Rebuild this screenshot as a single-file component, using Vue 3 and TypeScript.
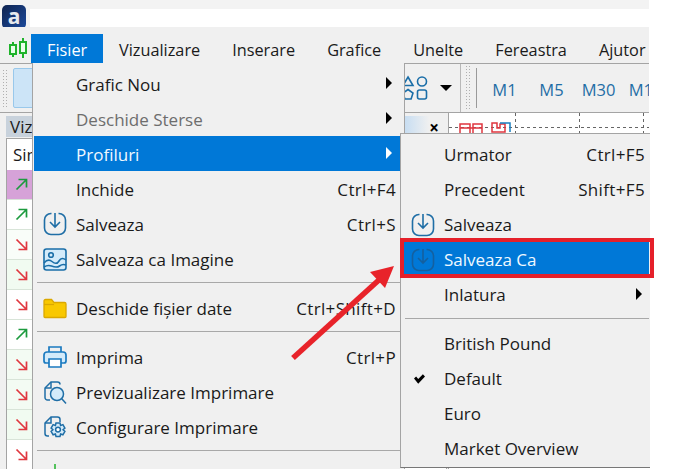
<script setup lang="ts">
interface Row {
  label?: string
  shortcut?: string
  icon?: string
  disabled?: boolean
  active?: boolean
  arrow?: boolean
  check?: boolean
  sep?: boolean
}
const topMenu = ['Fisier', 'Vizualizare', 'Inserare', 'Grafice', 'Unelte', 'Fereastra', 'Ajutor']
const periods = ['M1', 'M5', 'M30', 'M15']
const quotes = [
  { up: true, bg: '#d6a2d8' },
  { up: true, bg: '#ffffff' },
  { up: false, bg: '#f9fdf9' },
  { up: false, bg: '#f1fbf1' },
  { up: false, bg: '#ffffff' },
  { up: true, bg: '#ffffff' },
  { up: false, bg: '#f3fbf3' },
  { up: false, bg: '#f3fbf3' },
  { up: false, bg: '#f1fbf1' },
  { up: false, bg: '#ffffff' }
]
const menus: { cls: string; rows: Row[] }[] = [
  {
    cls: 'file',
    rows: [
      { label: 'Grafic Nou', arrow: true },
      { label: 'Deschide Sterse', arrow: true, disabled: true },
      { label: 'Profiluri', arrow: true, active: true },
      { label: 'Inchide', shortcut: 'Ctrl+F4' },
      { label: 'Salveaza', shortcut: 'Ctrl+S', icon: 'save' },
      { label: 'Salveaza ca Imagine', icon: 'image' },
      { sep: true },
      { label: 'Deschide fișier date', shortcut: 'Ctrl+Shift+D', icon: 'folder' },
      { sep: true },
      { label: 'Imprima', shortcut: 'Ctrl+P', icon: 'print' },
      { label: 'Previzualizare Imprimare', icon: 'preview' },
      { label: 'Configurare Imprimare', icon: 'setup' },
      { sep: true },
      { icon: 'tick' }
    ]
  },
  {
    cls: 'profiles',
    rows: [
      { label: 'Urmator', shortcut: 'Ctrl+F5' },
      { label: 'Precedent', shortcut: 'Shift+F5' },
      { label: 'Salveaza', icon: 'save' },
      { label: 'Salveaza Ca', icon: 'save', active: true },
      { label: 'Inlatura', arrow: true },
      { sep: true },
      { label: 'British Pound' },
      { label: 'Default', check: true },
      { label: 'Euro' },
      { label: 'Market Overview' }
    ]
  }
]
</script>

<template>
  <div class="page">
    <div class="window">
      <header class="titlebar">
        <div class="logo">a</div>
        <div class="search"></div>
      </header>

      <nav class="menubar">
        <svg class="candles" width="20" height="24" viewBox="0 0 20 24" fill="none" stroke="#1fb32b" stroke-width="2">
          <path d="M5 5v15M15 1v20" />
          <rect x="2" y="8" width="6" height="9" fill="#eaffea" />
          <rect x="12" y="5" width="6" height="11" fill="#eaffea" />
        </svg>
        <span v-for="(m, i) in topMenu" :key="m" class="top-item" :class="{ open: i === 0 }">{{ m }}</span>
      </nav>

      <div class="toolbar">
        <div class="grip"></div>
        <div class="pressed"></div>
        <div class="tb-fill"></div>
        <svg class="shapes" width="26" height="26" viewBox="0 0 26 26" fill="none" stroke="#1a6ea8" stroke-width="1.6">
          <path d="M6 2l5 8.5H1z" />
          <circle cx="20" cy="6.5" r="4.5" />
          <path d="M6 14.5l5 3.6-1.9 5.9H2.9L1 18.1z" />
          <rect x="15.5" y="15" width="9" height="9" rx="2" />
        </svg>
        <span class="caret"></span>
        <div class="tb-sep"></div>
        <div class="grip second"></div>
        <div class="tb-sep thin"></div>
        <div class="periods">
          <span v-for="p in periods" :key="p" class="period">{{ p }}</span>
        </div>
      </div>

      <main class="workspace">
        <section class="panel">
          <div class="panel-head">
            <span class="tab">Viz</span>
            <span class="close">×</span>
          </div>
          <div class="list">
            <div class="list-head"><span class="peek">Simbol</span></div>
            <div v-for="(q, i) in quotes" :key="i" class="quote" :style="{ background: q.bg }">
              <svg width="13" height="13" viewBox="0 0 13 13" fill="none" :stroke="q.up ? '#1c9a3e' : '#e0363f'" stroke-width="1.7">
                <path v-if="q.up" d="M1.5 11.5L11 2M3.5 1.5H11.5V9.5" />
                <path v-else d="M1.5 1.5L11 11M3.5 11.5H11.5V3.5" />
              </svg>
            </div>
          </div>
        </section>
        <section class="chart">
          <svg width="200" height="24" viewBox="0 0 200 24" fill="none">
            <path d="M0 14.5H200M66.5 0V24M130.5 0V24M194.5 0V24" stroke="#666" stroke-dasharray="3 3" />
            <path d="M11 11h10v10H11zM24 11h9v10h-9zM11 15h22" stroke="#e0363f" stroke-width="1.5" />
            <path d="M43 19V10h5v5h3v-4h5v8z" stroke="#e0363f" stroke-width="1.5" />
            <path d="M51 10h10v9" stroke="#1a7fc0" stroke-width="1.5" />
          </svg>
        </section>
      </main>
    </div>

    <div v-for="menu in menus" :key="menu.cls" class="menu" :class="menu.cls">
      <template v-for="(row, i) in menu.rows" :key="i">
        <div v-if="row.sep" class="sep"></div>
        <div v-else class="row" :class="{ active: row.active, disabled: row.disabled }">
          <span class="ico">
            <svg v-if="row.icon === 'save'" width="24" height="24" viewBox="0 0 24 24" fill="none" :stroke="row.active ? '#14609f' : '#1f6ea6'" stroke-width="1.6">
              <path d="M8.5 1.5H8A6.500 6.500 0 0 0 1.500 8v8A6.500 6.500 0 0 0 8 22.500h8a6.500 6.500 0 0 0 6.500-6.500V8A6.500 6.500 0 0 0 16 1.500h-.5" />
              <path d="M12 1v13.500M7 10l5 5 5-5" />
            </svg>
            <svg v-else-if="row.icon === 'image'" width="24" height="24" viewBox="0 0 24 24" fill="#d4ebfa" stroke="#1a6ea8" stroke-width="1.6">
              <rect x="1" y="2" width="22" height="21" rx="2.500" />
              <circle cx="8" cy="8" r="2.300" fill="none" />
              <path d="M1 16c3-3.500 5.500-3.500 8-1.500s5 3 7-.500 4.500-3 7-1" fill="none" />
              <path d="M1 20c3-2 5-2 7.500-1s6 1.500 8 0 4-2 6.500-1" fill="none" />
            </svg>
            <svg v-else-if="row.icon === 'folder'" width="24" height="22" viewBox="0 0 24 22" fill="#f9c800" stroke="#dba800" stroke-width="1.300">
              <path d="M1 4a1.500 1.500 0 0 1 1.500-1.500h6L11 5.500h10.500A1.500 1.500 0 0 1 23 7v12.500a1 1 0 0 1-1 1H2a1 1 0 0 1-1-1z" />
              <path d="M1 7.500h10" fill="none" />
            </svg>
            <svg v-else-if="row.icon === 'print'" width="24" height="24" viewBox="0 0 24 24" fill="none" stroke="#1a7ac0" stroke-width="1.700">
              <path d="M6 7V2h12v5" />
              <path d="M6 18H3a2 2 0 0 1-2-2v-6a3 3 0 0 1 3-3h16a3 3 0 0 1 3 3v6a2 2 0 0 1-2 2h-3" fill="#d4ebfa" />
              <path d="M6 14h12v8H6z" fill="#fff" />
            </svg>
            <svg v-else-if="row.icon === 'preview'" width="24" height="26" viewBox="0 0 24 26" fill="none" stroke="#1f6ea6" stroke-width="1.500">
              <path d="M7 21H4.500A2.500 2.500 0 0 1 2 18.500V9l6-6h6.500A2.500 2.500 0 0 1 17 5.500" />
              <path d="M2 9h6V3" />
              <circle cx="14" cy="15" r="6.500" fill="#d4ebfa" />
              <path d="M18.800 19.800L23 24.500" />
            </svg>
            <svg v-else-if="row.icon === 'setup'" width="24" height="26" viewBox="0 0 24 26" fill="none" stroke="#1f6ea6" stroke-width="1.500">
              <path d="M6 22H4.500A2.500 2.500 0 0 1 2 19.500V9l6-6h6.500A2.500 2.500 0 0 1 17 5.500V8" />
              <path d="M2 9h6V3" />
              <path d="M13 9h4l.6 2.400 2.300-.8 2 3.400-1.800 1.700 1.800 1.700-2 3.400-2.300-.8L17 22.400h-4l-.6-2.400-2.300.8-2-3.400 1.800-1.700-1.800-1.700 2-3.400 2.300.8z" fill="#d4ebfa" />
              <circle cx="15" cy="15.600" r="2.400" fill="#fff" />
            </svg>
            <svg v-else-if="row.icon === 'tick'" class="tick" width="4" height="10" viewBox="0 0 4 10" fill="none" stroke="#1fb32b" stroke-width="1.500">
              <path d="M2 0v10" />
            </svg>
            <svg v-else-if="row.check" class="check" width="11" height="10" viewBox="0 0 13 11" fill="#000">
              <path d="M0 5l2.500-2.500L5 5.500 10.500 0 13 2.500 5 11z" />
            </svg>
          </span>
          <span class="label">{{ row.label }}</span>
          <span v-if="row.shortcut" class="shortcut">{{ row.shortcut }}</span>
          <span v-if="row.arrow" class="arrow"></span>
        </div>
      </template>
    </div>

    <div class="callout"></div>
    <svg class="pointer" width="120" height="100" viewBox="0 0 120 100" fill="#e8232a">
      <path d="M3 97L90 18" stroke="#e8232a" stroke-width="5.500" />
      <path d="M104 5L80 11 95 27z" />
    </svg>
  </div>
</template>

<style>
html,
body {
  margin: 0;
  background: #fff;
}
</style>

<style scoped>
.page {
  position: relative;
  width: 683px;
  height: 469px;
  overflow: hidden;
  background: #fff;
  font-family: "Open Sans", "Noto Sans", sans-serif;
  font-size: 17px;
  color: #1a1a1a;
}
.window {
  width: 649px;
  height: 469px;
  background: #f0f0f0;
  display: flex;
  flex-direction: column;
}
.titlebar {
  height: 27px;
  padding-top: 9px;
  box-sizing: border-box;
  background: linear-gradient(#f3f3f3 9px, #fff 9px);
  display: flex;
  flex: none;
  position: relative;
}
.logo {
  position: absolute;
  left: 2px;
  top: 5px;
  width: 24px;
  height: 24px;
  border-radius: 5px;
  background: linear-gradient(135deg, #0f2450, #1c4a9c);
  color: #e6e9ee;
  font-weight: 700;
  font-size: 21px;
  line-height: 23px;
  text-align: center;
}
.search {
  width: 30px;
  height: 18px;
  background: #f3f3f3;
}
.menubar {
  height: 36px;
  flex: none;
  display: flex;
  align-items: flex-end;
  border-bottom: 1px solid #a4a4a4;
  position: relative;
  padding-left: 31px;
  background: #f0f0f0;
  font-size: 16.300px;
}
.candles {
  position: absolute;
  left: 8px;
  top: 10px;
}
.top-item {
  height: 29px;
  line-height: 32px;
  padding: 0 16px;
  white-space: nowrap;
}
.top-item.open {
  background: #0078d7;
  color: #fff;
  width: 72px;
  box-sizing: border-box;
}
.toolbar {
  height: 48px;
  flex: none;
  display: flex;
  align-items: center;
  border-bottom: 1px solid #a4a4a4;
  overflow: hidden;
}
.grip {
  width: 6px;
  height: 38px;
  margin-left: 2px;
  background-image: radial-gradient(#b0b0b0 0.7px, transparent 0.8px);
  background-size: 3px 3px;
  flex: none;
}
.grip.second {
  margin-left: 4px;
  width: 7px;
  height: 46px;
}
.pressed {
  width: 30px;
  height: 40px;
  margin-left: 5px;
  box-sizing: border-box;
  background: #cce4f7;
  border: 1px solid #99c8eb;
  border-radius: 2px;
  flex: none;
}
.tb-fill {
  flex: 0 0 360px;
}
.shapes {
  flex: none;
  margin-left: -1px;
}
.caret {
  width: 0;
  height: 0;
  margin-left: 12px;
  border-left: 6px solid transparent;
  border-right: 6px solid transparent;
  border-top: 6px solid #000;
  flex: none;
}
.tb-sep {
  width: 1px;
  height: 48px;
  background: #b8b8b8;
  margin-left: 8px;
  flex: none;
}
.tb-sep.thin {
  height: 40px;
  margin-left: 4px;
  background: #9a9a9a;
}
.periods {
  display: flex;
  margin-left: 4px;
  padding-top: 3px;
  flex: none;
  font-size: 16.500px;
}
.period {
  width: 47px;
  text-align: center;
  color: #1f6ea6;
  white-space: nowrap;
}
.workspace {
  flex: 1;
  display: flex;
  min-height: 0;
}
.panel {
  width: 441px;
  margin-left: 6px;
  display: flex;
  flex-direction: column;
  flex: none;
}
.panel-head {
  height: 25px;
  padding-top: 3px;
  box-sizing: border-box;
  display: flex;
  justify-content: space-between;
  flex: none;
}
.tab {
  flex: 1;
  background: linear-gradient(90deg, #c8d2dc 0 90%, #c4dcf2 90%, #f0f0f0 96%);
  padding-left: 4px;
  line-height: 21px;
  height: 21px;
}
.peek {
  display: block;
  width: 24px;
  overflow: hidden;
  white-space: nowrap;
}
.close {
  width: 20px;
  margin-left: -20px;
  text-align: center;
  font-weight: 700;
  color: #000;
  font-size: 17px;
  line-height: 24px;
  position: relative;
  left: -3px;
}
.list {
  border: 1px solid #a4a4a4;
  border-bottom: 0;
  flex: 1;
  background: #fff;
  overflow: hidden;
}
.list-head {
  height: 31px;
  line-height: 32px;
  padding-left: 6px;
}
.quote {
  height: 30px;
  box-sizing: border-box;
  border-bottom: 1px solid #d8e4d8;
  padding-left: 8px;
  display: flex;
  align-items: center;
}
.chart {
  margin-left: 1px;
  flex: 1;
  background: #fff;
  border-left: 1px solid #a4a4a4;
  line-height: 0;
}
.menu {
  position: absolute;
  background: #f0f0f0;
  box-sizing: border-box;
  overflow: hidden;
}
.menu.file {
  left: 32px;
  top: 63px;
  width: 373px;
  height: 406px;
  border: 1px solid #a4a4a4;
  border-top: 0;
  border-bottom: 0;
  padding: 3px 1px 0 1px;
}
.menu.profiles {
  left: 400px;
  top: 133px;
  width: 250px;
  height: 335px;
  border-top: 1px solid #a4a4a4;
  border-left: 1px solid #a4a4a4;
  border-bottom: 1px solid #777;
  padding: 3px 1px 0 1px;
}
.row {
  height: 35px;
  line-height: 36px;
  display: flex;
  align-items: center;
  position: relative;
  padding-right: 7px;
  white-space: nowrap;
}
.profiles .row {
  padding-right: 4px;
}
.row.active {
  background: #0078d7;
  color: #f0f8ff;
}
.row.disabled {
  color: #6d6d6d;
}
.ico {
  width: 42px;
  flex: none;
  display: flex;
  justify-content: center;
  box-sizing: border-box;
}
.ico svg {
  display: block;
}
.tick {
  position: absolute;
  top: 6px;
}
.check {
  margin-right: 8px;
}
.label {
  flex: 1;
}
.file .label,
.file .shortcut {
  padding-top: 2px;
}
.shortcut {
  margin-left: 12px;
  letter-spacing: 0.35px;
}
.arrow {
  position: absolute;
  right: 11px;
  top: 11px;
  width: 0;
  height: 0;
  border-top: 6px solid transparent;
  border-bottom: 6px solid transparent;
  border-left: 6px solid #000;
}
.profiles .arrow {
  right: 7px;
}
.row.active .arrow {
  border-left-color: #fff;
}
.sep {
  height: 14.500px;
  margin-left: 3px;
  background: linear-gradient(#a8a8a8, #a8a8a8) no-repeat 0 6px / 100% 1px;
}
.file .sep {
  height: 14px;
}
.callout {
  position: absolute;
  left: 400px;
  top: 238px;
  width: 254px;
  height: 40px;
  box-sizing: border-box;
  border: 4px solid #e5202a;
}
.pointer {
  position: absolute;
  left: 290px;
  top: 261px;
}
</style>
